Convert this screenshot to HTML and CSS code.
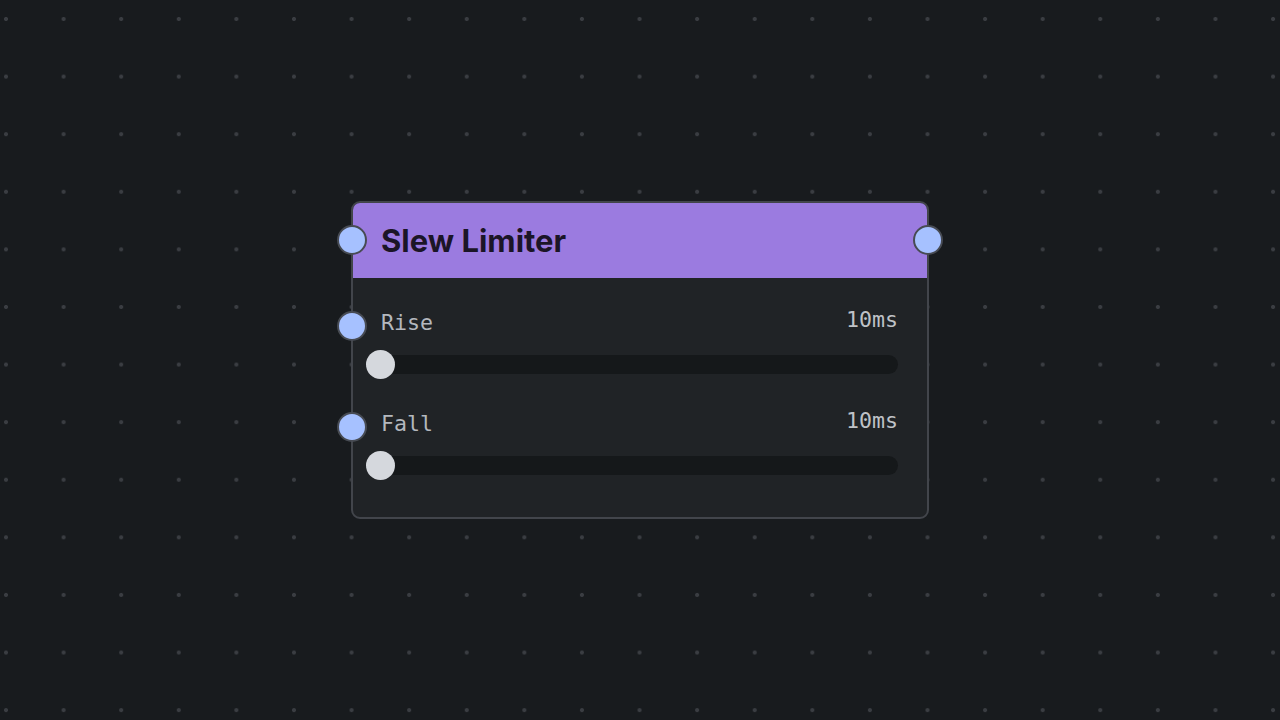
FILE: index.html
```html
<!doctype html>
<html lang="en">
    <head>
        <meta charset="UTF-8" />
        <meta name="viewport" content="width=device-width, initial-scale=1.0" />
        <title>Slew Limiter</title>
        <link rel="stylesheet" href="styles.css">
    </head>
    <body>
        <div class="canvas">
            <div class="node">
                <div class="node-header">
                    <span class="handle handle-in"></span>
                    <h1 class="node-title">Slew Limiter</h1>
                    <span class="handle handle-out"></span>
                </div>
                <div class="node-body">
                    <div class="param">
                        <span class="handle handle-param"></span>
                        <div class="param-head">
                            <span class="param-label">Rise</span>
                            <span class="param-value">10ms</span>
                        </div>
                        <div class="track">
                            <span class="thumb"></span>
                        </div>
                    </div>
                    <div class="param">
                        <span class="handle handle-param"></span>
                        <div class="param-head">
                            <span class="param-label">Fall</span>
                            <span class="param-value">10ms</span>
                        </div>
                        <div class="track">
                            <span class="thumb"></span>
                        </div>
                    </div>
                </div>
            </div>
        </div>
    </body>
</html>
```

FILE: styles.css
```css
html,
body {
    margin: 0;
    padding: 0;
    height: 100%;
}
body {
    font-family: Inter, "Noto Sans", sans-serif;
    background-color: #181b1e;
    background-image: radial-gradient(circle at center, #3a3d42 0, #3a3d42 1.6px, transparent 2.4px);
    background-size: 57.6px 57.6px;
    background-position: -22.8px -9.8px;
}
.canvas {
    height: 100vh;
    display: flex;
    align-items: center;
    justify-content: center;
}
.node {
    width: 578px;
    box-sizing: border-box;
    border: 2px solid #42454b;
    border-radius: 9px;
    background: #202326;
}
.node-header {
    position: relative;
    height: 75px;
    display: flex;
    align-items: center;
    padding-left: 28px;
    background: #9b7be0;
    border-radius: 7px 7px 0 0;
}
.node-title {
    margin: 0;
    font-size: 31px;
    font-weight: 700;
    color: #1b1527;
}
.handle {
    position: absolute;
    width: 30px;
    height: 30px;
    box-sizing: border-box;
    border: 2px solid #474b53;
    border-radius: 50%;
    background: #a6c1ff;
}
.handle-in {
    left: -16px;
    top: 22px;
}
.handle-out {
    right: -16px;
    top: 22px;
}
.node-body {
    padding: 32px 29px 42px 14px;
    display: flex;
    flex-direction: column;
    gap: 37px;
}
.param {
    position: relative;
}
.handle-param {
    left: -30px;
    top: 1px;
}
.param-head {
    display: flex;
    justify-content: space-between;
    align-items: flex-start;
    height: 26px;
    margin-bottom: 19px;
    font-family: "DejaVu Sans Mono", "Liberation Mono", monospace;
    font-size: 21.6px;
}
.param-label {
    padding-left: 14px;
    line-height: 26px;
    color: #b4b8be;
}
.param-value {
    line-height: 20px;
    color: #bfc2c7;
}
.track {
    position: relative;
    height: 19px;
    border-radius: 10px;
    background: #15181a;
}
.thumb {
    position: absolute;
    left: -1px;
    top: -5px;
    width: 29px;
    height: 29px;
    border-radius: 50%;
    background: #d5d8dd;
}
```
